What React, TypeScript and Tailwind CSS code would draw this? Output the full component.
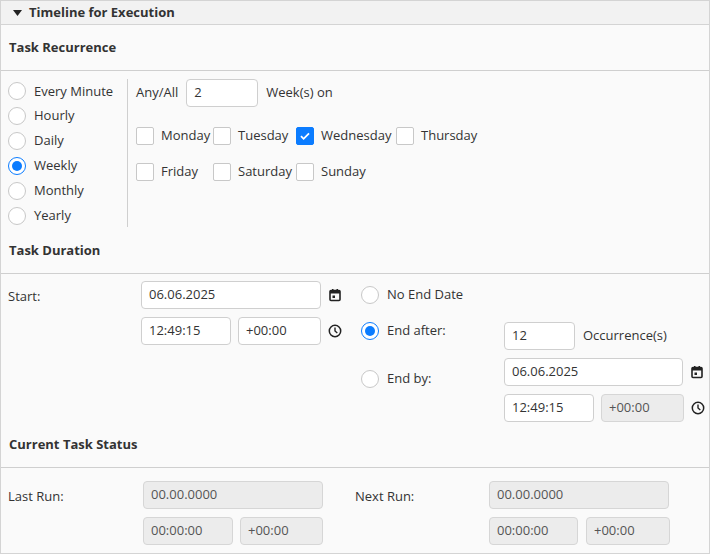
import React from "react";

const Radio = ({ on }: { on?: boolean }) => (
  <span className={`inline-flex w-[18px] h-[18px] rounded-full border items-center justify-center bg-white shrink-0 ${on ? "border-[#0b7cff]" : "border-[#c8c8c8]"}`}>
    {on && <span className="w-[10px] h-[10px] rounded-full bg-[#0b7cff]" />}
  </span>
);

const Check = ({ on }: { on?: boolean }) => (
  <span className={`inline-flex w-[18px] h-[18px] rounded-[2px] border items-center justify-center shrink-0 ${on ? "bg-[#0b7cff] border-[#0b7cff]" : "bg-white border-[#c8c8c8]"}`}>
    {on && (
      <svg width="12" height="12" viewBox="0 0 12 12"><path d="M2 6.2l2.6 2.6L10 3.4" stroke="#fff" strokeWidth="1.8" fill="none" /></svg>
    )}
  </span>
);

const Input = ({ w, v, dis }: { w: string; v: string; dis?: boolean }) => (
  <div className={`${w} h-[28px] border rounded-[4px] flex items-center px-[7px] text-[13px] ${dis ? "bg-[#ececec] border-[#d6d6d6] text-[#555]" : "bg-white border-[#cfcfcf] text-[#333]"}`}>{v}</div>
);

const Cal = () => (
  <svg width="14" height="14" viewBox="0 0 14 14" className="shrink-0">
    <rect x="2" y="2.5" width="10" height="10" rx="1" fill="none" stroke="#222" strokeWidth="1.6" />
    <rect x="2" y="2.5" width="10" height="3" fill="#222" />
    <rect x="4" y="1" width="1.5" height="2.5" fill="#222" />
    <rect x="8.5" y="1" width="1.5" height="2.5" fill="#222" />
    <rect x="4.5" y="7.5" width="2.5" height="2.5" fill="#222" />
  </svg>
);
const Clock = () => (
  <svg width="14" height="14" viewBox="0 0 14 14" className="shrink-0">
    <circle cx="7" cy="7" r="5.7" fill="none" stroke="#222" strokeWidth="1.5" />
    <path d="M7 3.5V7l2.3 2" stroke="#222" strokeWidth="1.4" fill="none" />
  </svg>
);

const Section = ({ t }: { t: string }) => (
  <div className="h-[46px] flex items-center pl-[8px] font-bold text-[13px] text-[#333] border-b border-[#cfcfcf]">{t}</div>
);

export default function App() {
  const freq = ["Every Minute", "Hourly", "Daily", "Weekly", "Monthly", "Yearly"];
  return (
    <div className="w-[711px] h-[557px] bg-white text-[13px] text-[#333]" style={{ fontFamily: "'Open Sans', sans-serif" }}>
      <div className="w-[710px] h-[554px] border border-[#d4d4d4] bg-[#fafafa]">
        <div className="h-[24px] bg-[#f2f2f2] border-b border-[#d4d4d4] flex items-center pl-[12px] gap-[7px] font-bold text-[13px]">
          <svg width="9" height="6" viewBox="0 0 9 6"><path d="M0 0h9L4.5 6z" fill="#222" /></svg>
          Timeline for Execution
        </div>
        <Section t="Task Recurrence" />
        <div className="flex pt-[8px] h-[157px]">
          <div className="w-[126px] pl-[7px] flex flex-col">
            {freq.map((f, i) => (
              <div key={f} className="h-[26px] flex items-center gap-[8px]"><Radio on={i === 3} />{f}</div>
            ))}
          </div>
          <div className="border-l border-[#cfcfcf] pl-[8px] h-[148px]">
            <div className="flex items-center h-[28px] gap-[8px]">
              <span>Any/All</span><Input w="w-[72px]" v="2" /><span>Week(s) on</span>
            </div>
            <div className="grid grid-cols-[77px_83px_100px_90px] mt-[20px] gap-y-[18px]">
              {["Monday", "Tuesday", "Wednesday", "Thursday", "Friday", "Saturday", "Sunday"].map((d) => (
                <div key={d} className="flex items-center gap-[7px] h-[18px]"><Check on={d === "Wednesday"} />{d}</div>
              ))}
            </div>
          </div>
        </div>
        <Section t="Task Duration" />
        <div className="flex pt-[7px] h-[148px]">
          <div className="w-[140px] pl-[7px] pt-[6px]">Start:</div>
          <div className="flex flex-col gap-[8px]">
            <div className="flex items-center gap-[7px]"><Input w="w-[180px]" v="06.06.2025" /><Cal /></div>
            <div className="flex items-center gap-[7px]">
              <Input w="w-[90px]" v="12:49:15" /><Input w="w-[83px]" v="+00:00" /><Clock />
            </div>
          </div>
          <div className="ml-[19px] w-[143px] flex flex-col pt-[5px]">
            <div className="flex items-center gap-[8px] h-[18px]"><Radio />No End Date</div>
            <div className="flex items-center gap-[8px] h-[18px] mt-[18px]"><Radio on />End after:</div>
            <div className="flex items-center gap-[8px] h-[18px] mt-[30px]"><Radio />End by:</div>
          </div>
          <div className="flex flex-col pt-[41px] gap-[8px]">
            <div className="flex items-center gap-[8px]"><Input w="w-[71px]" v="12" />Occurrence(s)</div>
            <div className="flex items-center gap-[7px]"><Input w="w-[179px]" v="06.06.2025" /><Cal /></div>
            <div className="flex items-center gap-[7px]">
              <Input w="w-[90px]" v="12:49:15" /><Input w="w-[83px]" v="+00:00" dis /><Clock />
            </div>
          </div>
        </div>
        <Section t="Current Task Status" />
        <div className="flex pt-[13px]">
          <div className="w-[142px] pl-[7px] pt-[6px]">Last Run:</div>
          <div className="flex flex-col gap-[8px] w-[212px]">
            <Input w="w-[180px]" v="00.00.0000" dis />
            <div className="flex gap-[7px]"><Input w="w-[90px]" v="00:00:00" dis /><Input w="w-[83px]" v="+00:00" dis /></div>
          </div>
          <div className="w-[134px] pt-[6px]">Next Run:</div>
          <div className="flex flex-col gap-[8px]">
            <Input w="w-[180px]" v="00.00.0000" dis />
            <div className="flex gap-[8px]"><Input w="w-[89px]" v="00:00:00" dis /><Input w="w-[84px]" v="+00:00" dis /></div>
          </div>
        </div>
      </div>
    </div>
  );
}
